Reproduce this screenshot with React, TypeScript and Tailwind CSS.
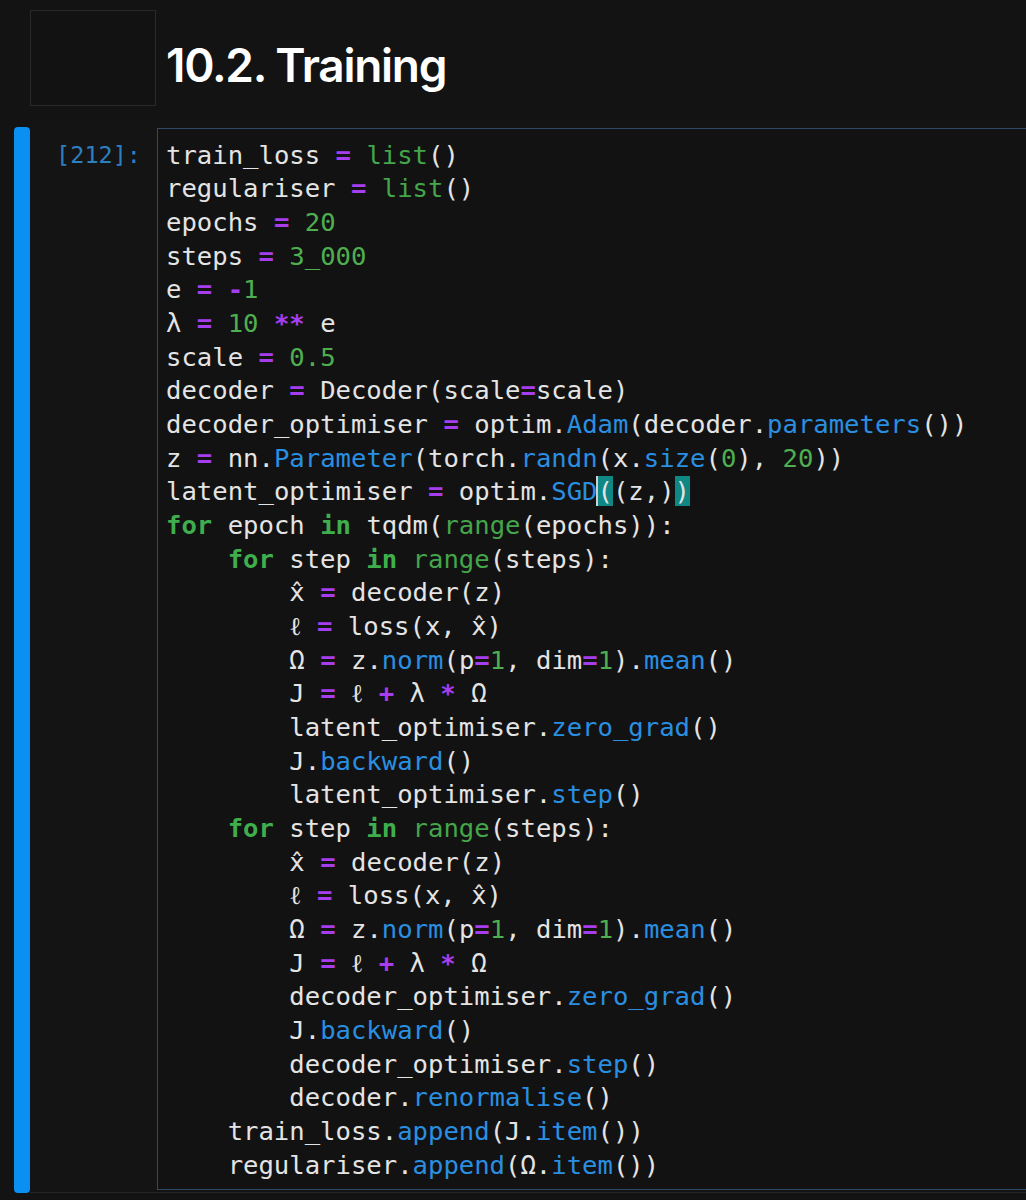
import React from "react";

const KW = new Set(["for", "in"]);
const BUILTIN = new Set(["list", "range"]);

const CLS: Record<string, string> = {
  num: "text-[#4fae4f]",
  kw: "text-[#3fae4c] font-bold",
  bi: "text-[#45a54a]",
  fn: "text-[#2a8fe0]",
  op: "text-[#a63ef0] font-bold",
};

type Tok = { t: string; c?: string };

function tokenize(line: string): Tok[] {
  const out: Tok[] = [];
  const re = /(\s+)|(\d[\d_]*(?:\.\d+)?)|([A-Za-z_][A-Za-z0-9_]*)|(\*\*|[=+\-*])|([\s\S])/g;
  let m: RegExpExecArray | null;
  let prev = "";
  while ((m = re.exec(line))) {
    if (m[1]) out.push({ t: m[1] });
    else if (m[2]) out.push({ t: m[2], c: "num" });
    else if (m[3]) {
      const w = m[3];
      let c: string | undefined;
      if (KW.has(w)) c = "kw";
      else if (BUILTIN.has(w)) c = "bi";
      else if (prev === ".") c = "fn";
      out.push({ t: w, c });
    } else if (m[4]) out.push({ t: m[4], c: "op" });
    else out.push({ t: m[5] });
    if (!m[1]) prev = m[0];
  }
  return out;
}

const LINES = [
  "train_loss = list()",
  "regulariser = list()",
  "epochs = 20",
  "steps = 3_000",
  "e = -1",
  "λ = 10 ** e",
  "scale = 0.5",
  "decoder = Decoder(scale=scale)",
  "decoder_optimiser = optim.Adam(decoder.parameters())",
  "z = nn.Parameter(torch.randn(x.size(0), 20))",
  "__CURSOR__",
  "for epoch in tqdm(range(epochs)):",
  "    for step in range(steps):",
  "        x̂ = decoder(z)",
  "        ℓ = loss(x, x̂)",
  "        Ω = z.norm(p=1, dim=1).mean()",
  "        J = ℓ + λ * Ω",
  "        latent_optimiser.zero_grad()",
  "        J.backward()",
  "        latent_optimiser.step()",
  "    for step in range(steps):",
  "        x̂ = decoder(z)",
  "        ℓ = loss(x, x̂)",
  "        Ω = z.norm(p=1, dim=1).mean()",
  "        J = ℓ + λ * Ω",
  "        decoder_optimiser.zero_grad()",
  "        J.backward()",
  "        decoder_optimiser.step()",
  "        decoder.renormalise()",
  "    train_loss.append(J.item())",
  "    regulariser.append(Ω.item())",
];

const LH = 33.67;
const rowH = (i: number) => Math.round((i + 1) * LH) - Math.round(i * LH);

function Text({ s }: { s: string }) {
  const parts = s.split(/(_)/);
  return (
    <>
      {parts.map((p, i) =>
        p === "_" ? (
          <span key={i} className="relative top-[-1px]">
            _
          </span>
        ) : (
          <React.Fragment key={i}>{p}</React.Fragment>
        )
      )}
    </>
  );
}

function Line({ text, i }: { text: string; i: number }) {
  const h = rowH(i);
  return (
    <div className="whitespace-pre" style={{ height: h, lineHeight: `${h}px` }}>
      {tokenize(text).map((tk, k) => (
        <span key={k} className={tk.c ? CLS[tk.c] : undefined}>
          <Text s={tk.t} />
        </span>
      ))}
    </div>
  );
}

function CursorLine({ i }: { i: number }) {
  const h = rowH(i);
  return (
    <div className="whitespace-pre" style={{ height: h, lineHeight: `${h}px` }}>
      <span>
        latent<Text s="_" />optimiser{" "}
      </span>
      <span className={CLS.op}>=</span>
      <span> optim.</span>
      <span className={CLS.fn}>SGD</span>
      <span className="relative border-l-2 border-[#cfcfcf] bg-[#0f8785] -ml-[2px]">(</span>
      <span>(z,)</span>
      <span className="bg-[#0f8785]">)</span>
    </div>
  );
}

export default function App() {
  return (
    <div className="min-h-[1200px] w-[1026px] overflow-hidden bg-[#131313] pt-[10px]">
      <div className="flex items-start">
        <div className="ml-[30px] h-[96px] w-[126px] border border-[#2a2a2a] bg-[#121212]" />
        <h1
          className="ml-[10px] mt-[27px] text-[46px] font-semibold leading-[56px] tracking-[-1.3px] text-white"
          style={{ fontFamily: "Inter, 'Noto Sans', sans-serif" }}
        >
          10.2. Training
        </h1>
      </div>
      <div className="mt-[21px] ml-[14px] flex h-[1066px]">
        <div className="w-[16px] rounded-[4px] bg-[#0a8ff2]" />
        <div className="flex flex-1 border-b border-[#262626] bg-[#141414]">
          <div
            className="w-[127px] pt-[12px] pr-[16px] text-right text-[23.5px] leading-[33px] text-[#2d7fc0]"
            style={{ fontFamily: "'DejaVu Sans Mono', monospace" }}
          >
            [212]:
          </div>
          <div
            className="mt-[1px] mb-[2px] flex-1 border-y border-l border-[#2d4a68] bg-[#121212] pl-[8px] pt-[9px] text-[25.6px] text-[#e4e4e4]"
            style={{ fontFamily: "'DejaVu Sans Mono', monospace" }}
          >
            {LINES.map((l, i) =>
              l === "__CURSOR__" ? <CursorLine key={i} i={i} /> : <Line key={i} i={i} text={l} />
            )}
          </div>
        </div>
      </div>
    </div>
  );
}
